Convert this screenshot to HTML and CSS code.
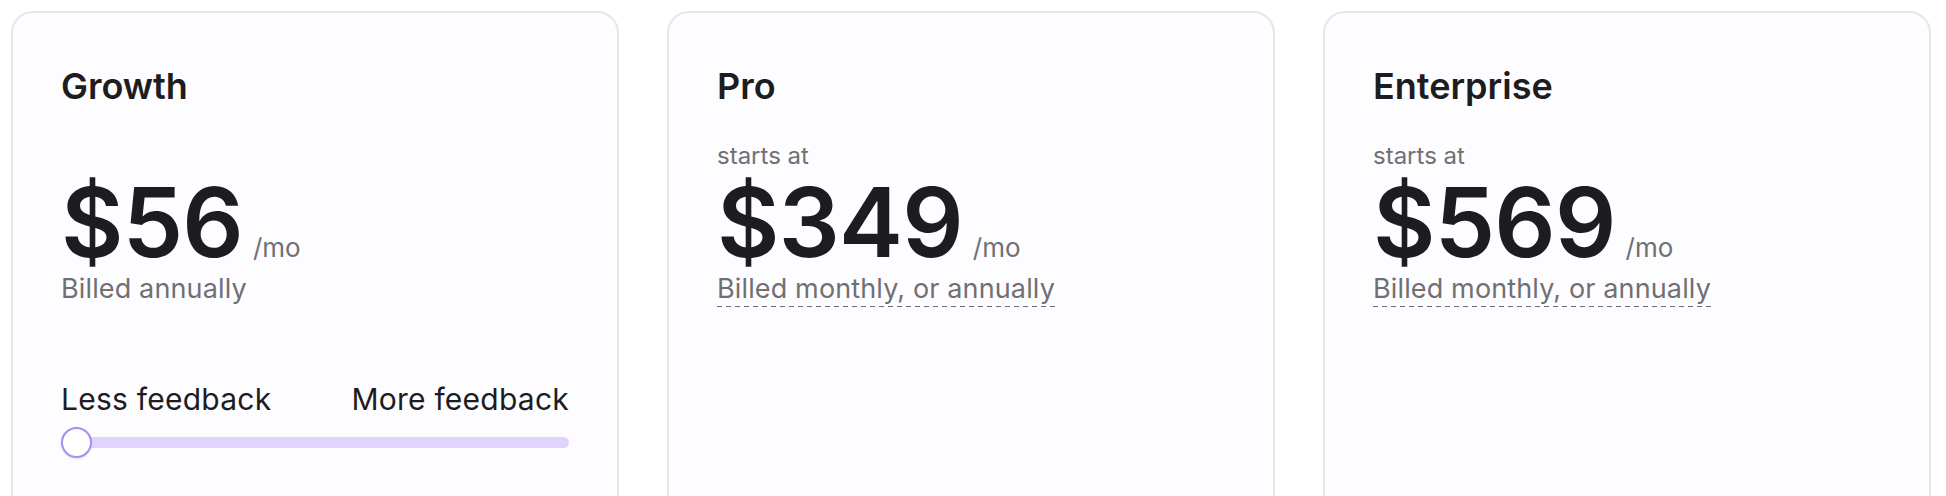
FILE: index.html
```html
<!DOCTYPE html>
<html lang="en">
<head>
<meta charset="utf-8">
<title>Pricing</title>
<link rel="stylesheet" href="styles.css">
</head>
<body>
<main class="plans">
  <section class="card">
    <h2 class="plan-name">Growth</h2>
    <div class="prefix prefix-empty"></div>
    <div class="price-row">
      <span class="price">$56</span>
      <span class="per">/mo</span>
    </div>
    <div class="billing"><span class="billing-text">Billed annually</span></div>
    <div class="range">
      <div class="range-labels">
        <span>Less feedback</span>
        <span>More feedback</span>
      </div>
      <div class="slider">
        <div class="track"></div>
        <div class="thumb"></div>
      </div>
    </div>
  </section>
  <section class="card">
    <h2 class="plan-name">Pro</h2>
    <div class="prefix">starts at</div>
    <div class="price-row">
      <span class="price">$349</span>
      <span class="per">/mo</span>
    </div>
    <div class="billing"><span class="billing-text dashed">Billed monthly, or annually</span></div>
  </section>
  <section class="card">
    <h2 class="plan-name">Enterprise</h2>
    <div class="prefix">starts at</div>
    <div class="price-row">
      <span class="price">$569</span>
      <span class="per">/mo</span>
    </div>
    <div class="billing"><span class="billing-text dashed">Billed monthly, or annually</span></div>
  </section>
</main>
</body>
</html>
```
FILE: styles.css
```css
* { box-sizing: border-box; }
html, body {
  margin: 0;
  padding: 0;
  background: #ffffff;
  font-family: Inter, "Noto Sans", "Liberation Sans", sans-serif;
  color: #1d1c20;
  overflow: hidden;
}
.plans {
  display: grid;
  grid-template-columns: repeat(3, 608px);
  column-gap: 48px;
  padding: 11px 0 0 11px;
}
.card {
  border: 2px solid #e6e4e9;
  border-radius: 22px;
  background: #fdfcfe;
  padding: 52px 48px 0 48px;
  min-height: 560px;
  display: flex;
  flex-direction: column;
}
.plan-name {
  margin: 0;
  font-size: 36px;
  line-height: 42px;
  font-weight: 600;
  letter-spacing: 0;
}
.prefix {
  margin-top: 33px;
  height: 32px;
  font-size: 24px;
  line-height: 32px;
  color: #707074;
}
.price-row {
  margin-top: 2px;
  display: flex;
  align-items: baseline;
  gap: 10px;
}
.price {
  font-size: 96px;
  line-height: 96px;
  font-weight: 600;
  letter-spacing: -0.008em;
}
.per {
  font-size: 26px;
  color: #707074;
}
.billing {
  margin-top: 2px;
  font-size: 27px;
  line-height: 34px;
  letter-spacing: 0.005em;
  color: #707074;
}
.billing-text {
  display: inline-block;
}
.dashed {
  background-image: repeating-linear-gradient(to right, #6f6e73 0 5px, transparent 5px 9px);
  background-repeat: no-repeat;
  background-size: 100% 1.5px;
  background-position: left bottom;
  padding-bottom: 1px;
}
.range {
  margin-top: 75px;
}
.range-labels {
  display: flex;
  justify-content: space-between;
  font-size: 30px;
  line-height: 36px;
  letter-spacing: 0.008em;
  color: #1d1c20;
}
.slider {
  position: relative;
  margin-top: 10px;
  height: 31px;
  display: flex;
  align-items: center;
}
.track {
  width: 100%;
  height: 11px;
  border-radius: 6px;
  background: #e0d4fc;
}
.thumb {
  position: absolute;
  left: 0;
  top: 0;
  width: 31px;
  height: 31px;
  border-radius: 50%;
  background: #ffffff;
  border: 2px solid #a88ef2;
  box-shadow: 0 1px 2px rgba(120, 90, 200, 0.15);
}
```
